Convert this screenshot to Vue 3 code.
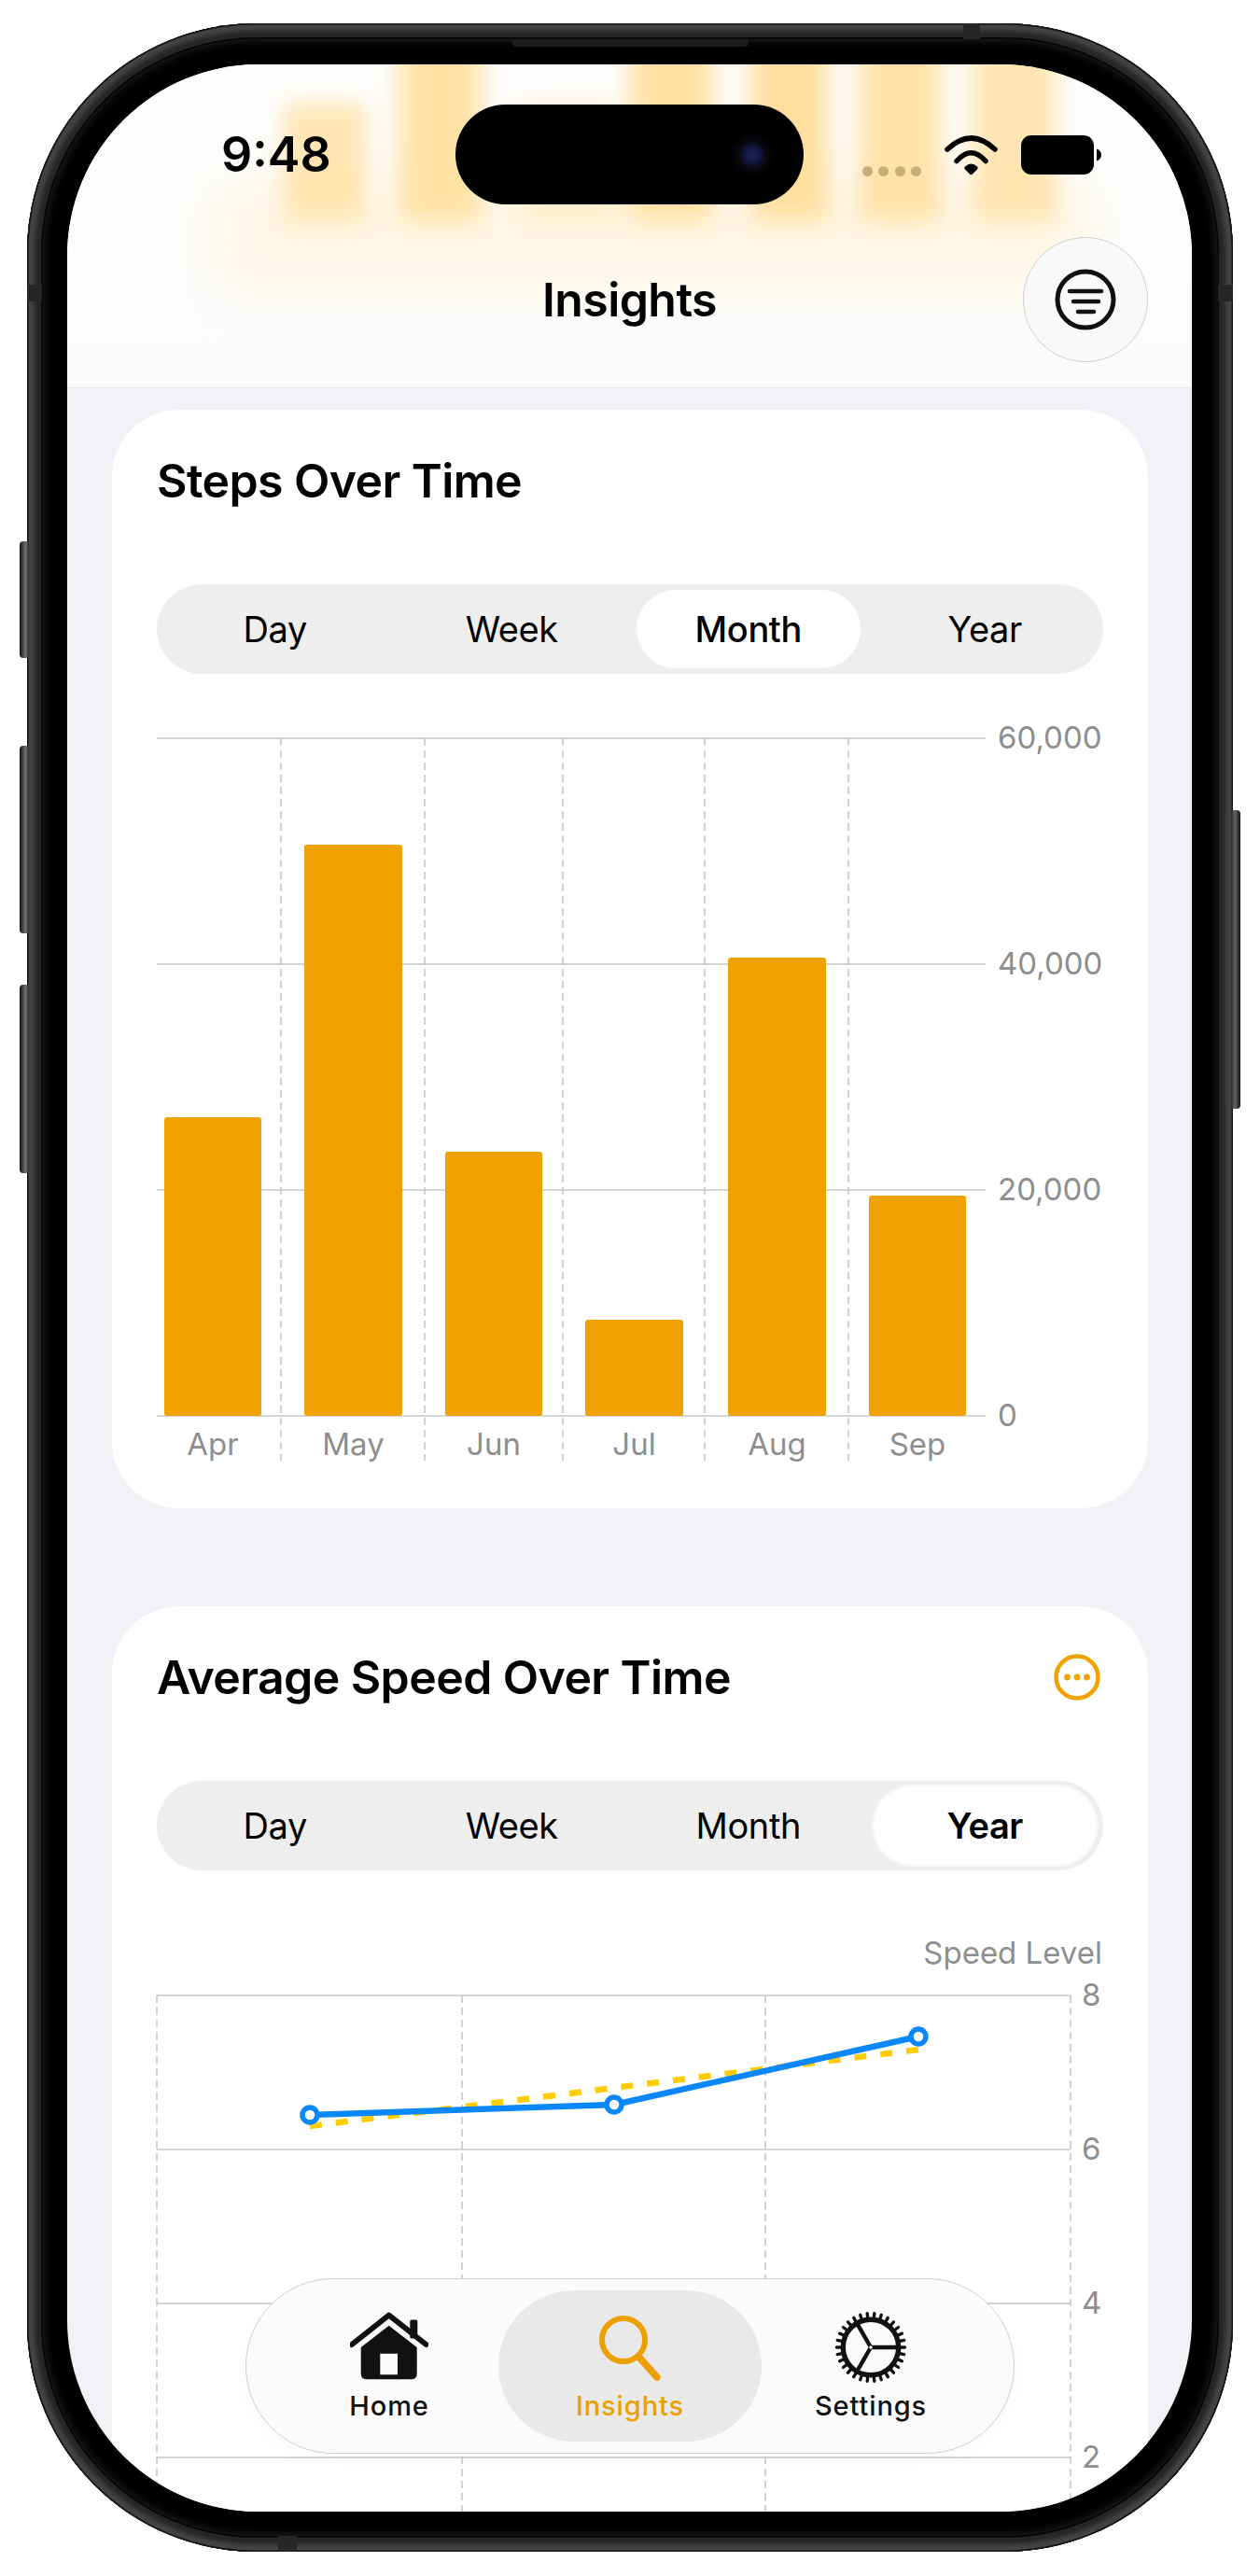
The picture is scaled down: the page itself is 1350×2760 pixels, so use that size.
<template>
  <div class="page">
    <div class="phone">
      <!-- side buttons + antenna bands -->
      <span class="side-btn btn-a"></span>
      <span class="side-btn btn-b"></span>
      <span class="side-btn btn-c"></span>
      <span class="side-btn btn-r"></span>
      <span class="band band-top"></span>
      <span class="band band-left"></span>
      <span class="band band-right"></span>
      <span class="band band-bottom"></span>
      <span class="speaker"></span>

      <div class="screen">
        <div class="content">
          <section class="card">
            <div class="card-head">
              <h2>Steps Over Time</h2>
            </div>
            <div class="seg">
              <div v-for="s in ranges" :key="s" class="seg-item" :class="{ on: s === 'Month' }">{{ s }}</div>
            </div>
            <svg class="chart" width="1014" height="814" viewBox="0 0 1014 814">
              <line v-for="y in stepLines" :key="y" class="grid" x1="0" x2="888" :y1="y" :y2="y" />
              <line v-for="x in stepCols" :key="x" class="dash" :x1="x" :x2="x" y1="20" y2="794" />
              <rect v-for="b in stepBars" :key="b.label" class="bar" :x="b.x" :y="b.top" :width="b.w" :height="746 - b.top" rx="3" />
              <text v-for="b in stepBars" :key="b.label + 't'" class="tick" :x="b.x + b.w / 2" y="788" text-anchor="middle">{{ b.label }}</text>
              <text v-for="t in stepTicks" :key="t.label" class="tick" x="901" :y="t.y + 11">{{ t.label }}</text>
            </svg>
          </section>

          <section class="card second">
            <div class="card-head">
              <h2>Average Speed Over Time</h2>
              <svg class="more" width="52" height="52" viewBox="0 0 52 52">
                <circle cx="26" cy="26" r="22.5" fill="none" stroke="#f0a300" stroke-width="4.5" />
                <circle cx="15.5" cy="26" r="3.4" fill="#f0a300" />
                <circle cx="26" cy="26" r="3.4" fill="#f0a300" />
                <circle cx="36.5" cy="26" r="3.4" fill="#f0a300" />
              </svg>
            </div>
            <div class="seg">
              <div v-for="s in ranges" :key="s" class="seg-item" :class="{ on: s === 'Year', strong: s === 'Year' }">{{ s }}</div>
            </div>
            <svg class="chart speed" width="1014" height="620" viewBox="0 0 1014 620">
              <text class="tick" x="1013" y="30" text-anchor="end">Speed Level</text>
              <line v-for="t in speedTicks" :key="t.label" class="grid" x1="0" x2="979" :y1="t.y" :y2="t.y" />
              <line v-for="x in speedCols" :key="x" class="dash" :x1="x" :x2="x" y1="64" y2="620" />
              <text v-for="t in speedTicks" :key="t.label + 't'" class="tick" x="991" :y="t.y + 11">{{ t.label }}</text>
              <polyline class="avg" points="164,204 816,122" />
              <polyline class="line" points="164,192 490,181 816,108" />
              <circle v-for="p in speedPoints" :key="p[0]" class="dot" :cx="p[0]" :cy="p[1]" r="8" />
            </svg>
          </section>
        </div>

        <!-- frosted header lying over the scroll content -->
        <header class="top">
          <span class="glow-band"></span>
          <div class="glow">
            <span v-for="g in glowBars" :key="g.left" class="glow-bar" :style="{ left: g.left + 'px', width: g.width + 'px', top: g.top + 'px', opacity: g.alpha }"></span>
          </div>
          <div class="status">
            <span class="time">9:48</span>
            <div class="status-right">
              <div class="dots"><i></i><i></i><i></i><i></i></div>
              <svg width="57" height="43" viewBox="0 0 57 43">
                <path d="M3 15Q28.5-9 54 15" fill="none" stroke="#000" stroke-width="5.5" stroke-linecap="round" />
                <path d="M13 27.5Q28.5 10 44 27.5" fill="none" stroke="#000" stroke-width="5.5" stroke-linecap="round" />
                <path d="M22 33.5Q28.5 27.500 35 33.5Q36.500 35 35 36.500L30 41.500Q28.500 43 27 41.500L22 36.500Q20.500 35 22 33.500Z" fill="#000" />
              </svg>
              <svg width="86" height="42" viewBox="0 0 86 42">
                <rect x="0" y="0" width="78" height="42" rx="11" fill="#000" />
                <path d="M81 14.500C84 15.500 86 18 86 21C86 24 84 26.500 81 27.500Z" fill="#000" />
              </svg>
            </div>
          </div>
          <div class="nav">
            <span></span>
            <h1>Insights</h1>
            <button class="filter" type="button">
              <svg width="66" height="66" viewBox="0 0 66 66">
                <circle cx="33" cy="33" r="30" fill="none" stroke="#111" stroke-width="5" />
                <path d="M16 24H50M20 35H47M25 46H42" fill="none" stroke="#111" stroke-width="4.500" stroke-linecap="round" />
              </svg>
            </button>
          </div>
        </header>

        <div class="island"><span class="lens"></span></div>

        <nav class="tabs">
          <div class="tab">
            <svg width="84" height="76" viewBox="0 0 84 76">
              <path d="M2 35L41.700 3.500L81.500 35" fill="none" stroke="#111" stroke-width="6" stroke-linecap="round" stroke-linejoin="round" />
              <rect x="64.300" y="8.500" width="8" height="20" rx="1.500" fill="#111" />
              <path fill-rule="evenodd" fill="#111" d="M41.700 14.700L71.700 38V66Q71.700 72.300 65.500 72.300H18Q11.700 72.300 11.700 66V38ZM32.300 44.700V67.300H51V44.700Z" />
            </svg>
            <span>Home</span>
          </div>
          <div class="tab active">
            <svg width="76" height="76" viewBox="0 0 76 76">
              <circle cx="31" cy="30" r="23" fill="none" stroke="#eba000" stroke-width="6" />
              <path d="M49 50L67 70" fill="none" stroke="#eba000" stroke-width="7.500" stroke-linecap="round" />
            </svg>
            <span>Insights</span>
          </div>
          <div class="tab">
            <svg width="80" height="80" viewBox="-40 -40 80 80">
              <line v-for="t in gearTeeth" :key="t.x1" :x1="t.x1" :y1="t.y1" :x2="t.x2" :y2="t.y2" stroke="#111" stroke-width="3.400" stroke-linecap="round" />
              <circle r="30.500" fill="none" stroke="#111" stroke-width="5.500" />
              <path d="M0 0H30M0 0L-15 -26M0 0L-15 26" fill="none" stroke="#111" stroke-width="4.500" />
              <circle r="1.800" fill="#fff" />
            </svg>
            <span>Settings</span>
          </div>
        </nav>
      </div>
    </div>
  </div>
</template>

<script setup>
const ranges = ['Day', 'Week', 'Month', 'Year']

// chart 1, coordinates in svg space
const stepLines = [20, 262, 504, 746]
const stepCols = [133, 287, 435, 587, 741]
const stepTicks = [
  { label: '60,000', y: 20 },
  { label: '40,000', y: 262 },
  { label: '20,000', y: 504 },
  { label: '0', y: 746 },
]
const stepBars = [
  { label: 'Apr', x: 8, w: 104, top: 426 },
  { label: 'May', x: 158, w: 105, top: 134 },
  { label: 'Jun', x: 309, w: 104, top: 463 },
  { label: 'Jul', x: 459, w: 105, top: 643 },
  { label: 'Aug', x: 612, w: 105, top: 255 },
  { label: 'Sep', x: 763, w: 104, top: 510 },
]

// chart 2
const speedCols = [0, 327, 652, 979]
const speedTicks = [
  { label: '8', y: 64 },
  { label: '6', y: 229 },
  { label: '4', y: 394 },
  { label: '2', y: 559 },
]
const speedPoints = [
  [164, 192],
  [490, 181],
  [816, 108],
]

// blurred chart behind the header
const glowBars = [
  { left: 232, width: 88, top: 42, alpha: 0.8 },
  { left: 356, width: 88, top: -30, alpha: 0.95 },
  { left: 484, width: 106, top: 40, alpha: 0.4 },
  { left: 602, width: 90, top: -30, alpha: 0.95 },
  { left: 732, width: 84, top: -30, alpha: 1 },
  { left: 848, width: 88, top: -30, alpha: 0.9 },
  { left: 970, width: 90, top: -30, alpha: 0.8 },
]

const gearTeeth = Array.from({ length: 30 }, (_, i) => {
  const a = (i / 30) * Math.PI * 2
  return {
    x1: +(Math.cos(a) * 31).toFixed(2),
    y1: +(Math.sin(a) * 31).toFixed(2),
    x2: +(Math.cos(a) * 37.5).toFixed(2),
    y2: +(Math.sin(a) * 37.5).toFixed(2),
  }
})
</script>

<style scoped>
.page {
  width: 1350px;
  height: 2760px;
  padding: 25px 0 0 29px;
  box-sizing: border-box;
  background: #fff;
  font-family: Inter, "Liberation Sans", sans-serif;
  overflow: hidden;
}

.phone {
  position: relative;
  width: 1292px;
  height: 2709px;
  padding: 44px 44px 43px 43px;
  box-sizing: border-box;
  border-radius: 245px;
  background: #000;
  box-shadow:
    inset 0 0 0 1.5px #141414,
    inset 0 0 4px 8px #444,
    inset 0 0 0 15px #262626,
    inset 0 0 0 16.500px #040404,
    inset 0 0 8px 19px #1c1c1c;
}

.side-btn {
  position: absolute;
  width: 10px;
  border-radius: 4px 0 0 4px;
  background: linear-gradient(90deg, #141414 0, #6f6f6f 65%, #262626 100%);
}
.btn-a { left: -8px; top: 555px; height: 125px; }
.btn-b { left: -8px; top: 774px; height: 201px; }
.btn-c { left: -8px; top: 1030px; height: 202px; }
.btn-r {
  right: -8px;
  top: 843px;
  height: 320px;
  border-radius: 0 4px 4px 0;
  background: linear-gradient(270deg, #141414 0, #666 60%, #262626 100%);
}

.band { position: absolute; background: #262626; }
.band-top { left: 1003px; top: 0; width: 18px; height: 17px; }
.band-left { left: 0; top: 280px; width: 16px; height: 18px; }
.band-right { right: 0; top: 280px; width: 16px; height: 18px; }
.band-bottom { left: 269px; bottom: 0; width: 20px; height: 17px; }

.speaker {
  position: absolute;
  left: 520px;
  top: 17px;
  width: 253px;
  height: 8px;
  border-radius: 0 0 4px 4px;
  background: #1b1b1b;
}

.screen {
  position: relative;
  width: 1205px;
  height: 2622px;
  border-radius: 205px;
  overflow: hidden;
  background: #f1f1f6;
}

.content {
  padding: 370px 47px 0 48px;
}

.card {
  height: 1177px;
  padding: 46px 48px 0;
  box-sizing: border-box;
  border-radius: 72px;
  background: #fff;
}
.card.second {
  height: 1100px;
  margin-top: 105px;
}

.card-head {
  display: flex;
  justify-content: space-between;
  align-items: center;
  height: 60px;
  margin-bottom: 81px;
}
h2 {
  margin: 0;
  font-size: 50px;
  line-height: 60px;
  font-weight: 600;
  letter-spacing: -0.6px;
  color: #000;
}
.more { margin-right: 2px; }

.seg {
  display: flex;
  width: 1014px;
  height: 96px;
  border-radius: 48px;
  background: #eeeeee;
}
.seg-item {
  flex: 1;
  margin: 6px 7px;
  border-radius: 42px;
  text-align: center;
  font-size: 38px;
  line-height: 84px;
  font-weight: 400;
  letter-spacing: -0.4px;
  color: #000;
}
.seg-item.on {
  background: #fff;
  font-weight: 450;
}
.seg-item.strong {
  font-weight: 600;
  box-shadow: 0 0 0 2px #f7f7f7;
}

.chart {
  display: block;
  margin-top: 49px;
  overflow: visible;
}
.chart.speed { margin-top: 70px; }

.grid { stroke: #d4d4d4; stroke-width: 2; }
.dash { stroke: #c4c4c4; stroke-width: 1.5; stroke-dasharray: 8 5; }
.bar { fill: #f0a300; }
.tick {
  font-family: Inter, "Liberation Sans", sans-serif;
  font-size: 33px;
  fill: #8e8e8e;
}
.line { fill: none; stroke: #0a88fb; stroke-width: 6.500; stroke-linejoin: round; }
.avg { fill: none; stroke: #ffcc00; stroke-width: 6.500; stroke-dasharray: 13 15; }
.dot { fill: #fff; stroke: #0a88fb; stroke-width: 5.500; }

.top {
  position: absolute;
  left: 0;
  top: 0;
  width: 100%;
  height: 347px;
  overflow: hidden;
  border-bottom: 1px solid #ebebef;
  box-sizing: border-box;
  background: linear-gradient(180deg, #fefefe 0, #fdfdfd 60%, #fbfbfd 100%);
}
.glow {
  position: absolute;
  left: 0;
  top: 0;
  width: 100%;
  height: 210px;
  filter: blur(13px);
}
.glow-band {
  position: absolute;
  left: 160px;
  right: 110px;
  top: 130px;
  height: 110px;
  background: #fff6e3;
  filter: blur(32px);
}
.glow-bar {
  position: absolute;
  bottom: 42px;
  background: #ffdf9f;
}

.status {
  position: relative;
  top: 70px;
  display: flex;
  justify-content: space-between;
  align-items: center;
  height: 54px;
  padding: 0 97px 0 165px;
  box-sizing: border-box;
}
.time {
  font-size: 52px;
  line-height: 54px;
  font-weight: 600;
  letter-spacing: 0;
  color: #000;
}
.status-right {
  display: flex;
  align-items: center;
  gap: 25px;
}
.dots {
  display: flex;
  gap: 6.500px;
  margin-top: 34px;
}
.dots i {
  width: 11px;
  height: 11px;
  border-radius: 50%;
  background: #c8ad78;
}

.nav {
  position: relative;
  top: 131px;
  display: grid;
  grid-template-columns: 1fr auto 1fr;
  align-items: center;
  height: 134px;
  padding: 0 47px;
}
h1 {
  margin: 0;
  font-size: 50px;
  line-height: 60px;
  font-weight: 600;
  letter-spacing: -0.6px;
  color: #000;
}
.filter {
  justify-self: end;
  display: flex;
  align-items: center;
  justify-content: center;
  width: 134px;
  height: 134px;
  padding: 0;
  border: 1px solid #cfcfcf;
  border-radius: 50%;
  background: #f9f9f9;
}

.island {
  position: absolute;
  left: 416px;
  top: 43px;
  width: 373px;
  height: 107px;
  border-radius: 54px;
  background: #000;
}
.lens {
  position: absolute;
  left: 293px;
  top: 29px;
  width: 50px;
  height: 50px;
  border-radius: 50%;
  background: radial-gradient(circle, #1e2358 0, #12143a 26%, #08080f 42%, #000 68%);
}

.tabs {
  position: absolute;
  left: 191px;
  top: 2372px;
  display: grid;
  grid-template-columns: repeat(3, 258px);
  justify-content: center;
  width: 824px;
  height: 188px;
  padding: 12px 0;
  box-sizing: border-box;
  border: 1px solid #cfcfcf;
  border-radius: 94px;
  background: #fbfbfb;
  box-shadow: 0 6px 24px rgba(0, 0, 0, 0.025);
}
.tab {
  display: flex;
  flex-direction: column;
  align-items: center;
  height: 162px;
  padding-top: 22px;
  box-sizing: border-box;
  font-size: 29px;
  font-weight: 500;
  letter-spacing: 0.9px;
  color: #111;
}
.tab svg { height: 78px; }
.tab span {
  margin-top: 6px;
  line-height: 36px;
}
.tab.active {
  margin: 0 -12px;
  border-radius: 81px;
  background: #e9e9e9;
  color: #eba000;
}
</style>

<style>
html, body { margin: 0; background: #fff; }
</style>
